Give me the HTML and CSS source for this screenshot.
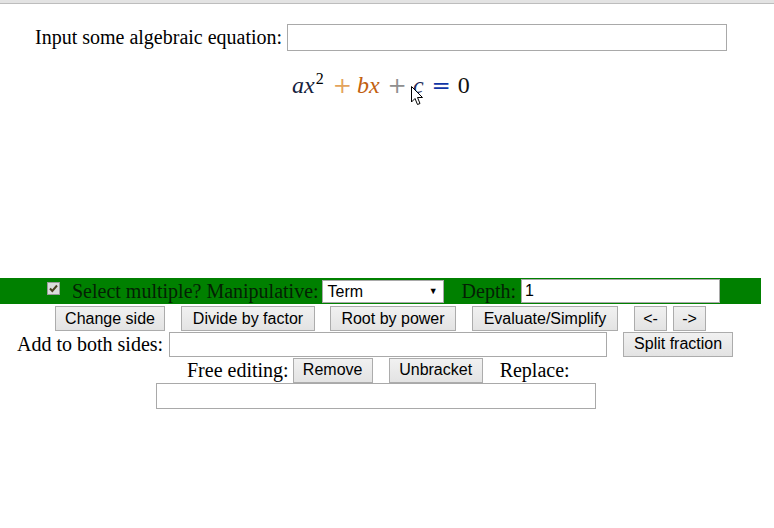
FILE: index.html
```html
<!DOCTYPE html>
<html>
<head>
<meta charset="utf-8">
<link rel="stylesheet" href="styles.css">
</head>
<body>
<div class="topstrip"></div>
<div class="row row-input">
  <label class="lbl">Input some algebraic equation:</label>
  <input class="txt txt-eq" type="text">
</div>
<div class="equation">
  <span class="v v-a">a</span><span class="v v-x">x</span><sup class="sup">2</sup>
  <span class="op op-plus1">+</span>
  <span class="v v-bx">bx</span>
  <span class="op op-plus2">+</span>
  <span class="v v-c">c</span>
  <span class="op op-eq">=</span>
  <span class="num">0</span>
  <svg class="cursor" width="13" height="20" viewBox="0 0 13 20"><path d="M0.5 0.5 L0.5 16 L4 12.5 L6.5 18.5 L9 17.5 L6.5 11.5 L11.5 11.5 Z" fill="#fff" stroke="#000" stroke-width="1"/></svg>
</div>
<div class="greenbar">
  <span class="chk"><svg width="13" height="13" viewBox="0 0 13 13"><rect x="0.5" y="0.5" width="12" height="12" fill="#dcdcdc" stroke="#9a9a9a"/><path d="M3 6.5 L5.3 9 L10 3.5" fill="none" stroke="#4b4020" stroke-width="2"/></svg></span>
  <span class="glbl">Select multiple? Manipulative:</span>
  <span class="sel">Term<span class="arrow">▼</span></span>
  <span class="glbl glbl-depth">Depth:</span>
  <input class="txt txt-depth" type="text" value="1">
</div>
<div class="row row-btns">
  <button class="btn b-change">Change side</button>
  <button class="btn b-divide">Divide by factor</button>
  <button class="btn b-root">Root by power</button>
  <button class="btn b-eval">Evaluate/Simplify</button>
  <button class="btn b-left">&lt;-</button>
  <button class="btn b-right">-&gt;</button>
</div>
<div class="row row-add">
  <label class="lbl">Add to both sides:</label>
  <input class="txt txt-add" type="text">
  <button class="btn b-split">Split fraction</button>
</div>
<div class="row row-free">
  <label class="lbl">Free editing:</label>
  <button class="btn b-remove">Remove</button>
  <button class="btn b-unbr">Unbracket</button>
  <label class="lbl lbl-replace">Replace:</label>
</div>
<div class="row row-replace">
  <input class="txt txt-replace" type="text">
</div>
</body>
</html>
```
FILE: styles.css
```css
html, body {
  margin: 0;
  padding: 0;
  background: #fff;
}
body {
  font-family: "Liberation Serif", "Times New Roman", serif;
  font-size: 20px;
  color: #000;
  width: 774px;
  height: 528px;
  overflow: hidden;
}
.topstrip {
  height: 3px;
  background: #e3e3e3;
  border-bottom: 1px solid #bdbdbd;
}
.row {
  display: flex;
  align-items: center;
}
.lbl {
  white-space: nowrap;
}
.txt {
  box-sizing: border-box;
  border: 1px solid #a9a9a9;
  background: #fff;
  margin: 0;
  padding: 0 3px;
  font-family: "Liberation Sans", Arial, sans-serif;
  font-size: 16px;
  outline: none;
}
.row-input {
  margin-top: 20px;
  padding-left: 35px;
  height: 27px;
}
.txt-eq {
  width: 440px;
  height: 27px;
  margin-left: 5px;
}
.equation {
  position: relative;
  display: flex;
  align-items: baseline;
  padding-left: 292px;
  margin-top: 17px;
  height: 30px;
  font-family: "Liberation Serif", "Times New Roman", serif;
  font-size: 24px;
  line-height: 34px;
}
.v {
  font-style: italic;
}
.v-a, .v-x { color: #14213d; }
.sup {
  font-size: 16px;
  line-height: 0;
  position: relative;
  top: -9px;
  margin-left: 1px;
  vertical-align: baseline;
}
.op {
  font-family: "DejaVu Serif", serif;
  font-size: 23px;
}
.op-plus1 { color: #e3a35c; margin: 0 5px 0 9px; }
.v-bx { color: #c2600f; }
.op-plus2 { color: #8f8f8f; margin: 0 6px 0 8px; }
.v-c { color: #1d2a5c; }
.op-eq { color: #1036a6; margin: 0 7px 0 8px; }
.num { color: #111; }
.cursor {
  position: absolute;
  left: 411px;
  top: 18px;
}
.greenbar {
  margin-top: 180px;
  width: 761px;
  height: 26px;
  background: #008000;
  display: flex;
  align-items: center;
}
.chk {
  display: flex;
  margin-left: 47px;
  margin-right: 12px;
  margin-top: -5px;
}
.glbl {
  color: #041f04;
  white-space: nowrap;
}
.sel {
  box-sizing: border-box;
  position: relative;
  width: 122px;
  height: 23px;
  margin-left: 3px;
  background: #fff;
  border: 1px solid #a9a9a9;
  font-family: "Liberation Sans", Arial, sans-serif;
  font-size: 16px;
  line-height: 21px;
  padding-left: 5px;
}
.arrow {
  position: absolute;
  right: 5px;
  top: 0;
  font-size: 9px;
}
.glbl-depth {
  margin-left: 18px;
}
.txt-depth {
  width: 199px;
  height: 24px;
  margin-left: 5px;
}
.btn {
  box-sizing: border-box;
  height: 25px;
  margin: 0;
  padding: 0;
  border: 1px solid #acacac;
  border-radius: 0;
  background: linear-gradient(#f1f1f1, #e3e3e3);
  font-family: "Liberation Sans", Arial, sans-serif;
  font-size: 16px;
  color: #000;
}
.row-btns {
  padding-left: 55px;
  margin-top: 2px;
  height: 25px;
}
.b-change { width: 110px; }
.b-divide { width: 134px; margin-left: 16px; }
.b-root { width: 126px; margin-left: 15px; }
.b-eval { width: 146px; margin-left: 16px; }
.b-left { width: 33px; margin-left: 16px; }
.b-right { width: 33px; margin-left: 6px; }
.row-add {
  padding-left: 17px;
  height: 26px;
}
.txt-add {
  width: 438px;
  height: 25px;
  margin-left: 6px;
}
.b-split { width: 110px; margin-left: 16px; }
.row-free {
  padding-left: 187px;
  height: 26px;
}
.b-remove { width: 80px; margin-left: 4px; }
.b-unbr { width: 94px; margin-left: 16px; }
.lbl-replace { margin-left: 17px; }
.row-replace {
  padding-left: 156px;
  height: 26px;
}
.txt-replace {
  width: 440px;
  height: 26px;
}
```
